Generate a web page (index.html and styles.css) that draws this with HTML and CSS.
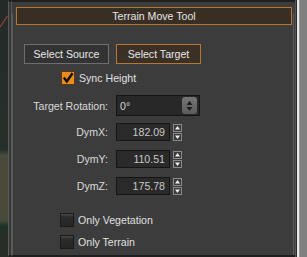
FILE: index.html
```html
<!DOCTYPE html>
<html>
<head>
<meta charset="utf-8">
<link rel="stylesheet" href="styles.css">
</head>
<body>
<div class="win">
  <div class="backdrop">
    <svg class="scratch" width="8" height="40" viewBox="0 0 8 40"><line x1="7.5" y1="16" x2="0" y2="27" stroke="#a0403a" stroke-width="1.2"/></svg>
  </div>
  <div class="edge-left"></div>
  <div class="panel">
    <div class="group">
      <div class="title">Terrain Move Tool</div>
      <div class="btn-row">
        <div class="btn">Select Source</div>
        <div class="btn active">Select Target</div>
      </div>
      <div class="check-row sync">
        <span class="box checked">
          <svg width="12" height="12" viewBox="0 0 12 12"><path d="M1.8 5.5 L4.8 9.5 L10.5 1.2" fill="none" stroke="#140e06" stroke-width="2.4"/></svg>
        </span>
        <span class="check-label">Sync Height</span>
      </div>
      <div class="form-row combo-row">
        <span class="lbl">Target Rotation:</span>
        <div class="combo">
          <span class="combo-text">0°</span>
          <span class="combo-btn">
            <svg width="7" height="12" viewBox="0 0 7 12"><path d="M3.5 1 L6.5 5 L0.5 5 Z M0.5 7 L6.5 7 L3.5 11 Z" fill="#1c1c1c"/></svg>
          </span>
        </div>
      </div>
      <div class="form-row num-row">
        <span class="lbl">DymX:</span>
        <div class="num">182.09</div>
        <div class="spin">
          <span class="sbtn"><svg width="7" height="6" viewBox="0 0 7 6"><path d="M3.5 1 L6 4.5 L1 4.5 Z" fill="#f0f0f0"/></svg></span>
          <span class="sbtn"><svg width="7" height="6" viewBox="0 0 7 6"><path d="M1 1.5 L6 1.5 L3.5 5 Z" fill="#f0f0f0"/></svg></span>
        </div>
      </div>
      <div class="form-row num-row">
        <span class="lbl">DymY:</span>
        <div class="num">110.51</div>
        <div class="spin">
          <span class="sbtn"><svg width="7" height="6" viewBox="0 0 7 6"><path d="M3.5 1 L6 4.5 L1 4.5 Z" fill="#f0f0f0"/></svg></span>
          <span class="sbtn"><svg width="7" height="6" viewBox="0 0 7 6"><path d="M1 1.5 L6 1.5 L3.5 5 Z" fill="#f0f0f0"/></svg></span>
        </div>
      </div>
      <div class="form-row num-row">
        <span class="lbl">DymZ:</span>
        <div class="num">175.78</div>
        <div class="spin">
          <span class="sbtn"><svg width="7" height="6" viewBox="0 0 7 6"><path d="M3.5 1 L6 4.5 L1 4.5 Z" fill="#f0f0f0"/></svg></span>
          <span class="sbtn"><svg width="7" height="6" viewBox="0 0 7 6"><path d="M1 1.5 L6 1.5 L3.5 5 Z" fill="#f0f0f0"/></svg></span>
        </div>
      </div>
      <div class="check-row veg">
        <span class="box"></span>
        <span class="check-label">Only Vegetation</span>
      </div>
      <div class="check-row ter">
        <span class="box"></span>
        <span class="check-label">Only Terrain</span>
      </div>
    </div>
  </div>
  <div class="edge-right"></div>
</div>
</body>
</html>
```

FILE: styles.css
```css
html, body {
  margin: 0;
  padding: 0;
}
body {
  width: 307px;
  height: 257px;
  overflow: hidden;
  background: #3c3c3c;
  font-family: "Liberation Sans", Arial, sans-serif;
  font-size: 10.6px;
  color: #dedede;
}
.win {
  display: flex;
  width: 307px;
  height: 257px;
}
.backdrop {
  width: 8px;
  flex: none;
  background: linear-gradient(to bottom, #232a27 0px, #26302b 150px, #4a4a3a 155px, #4a4a3a 220px, #1d3226 226px, #2a2c28 240px, #2a2c28 257px);
}
.scratch {
  display: block;
}
.edge-left {
  width: 2px;
  flex: none;
  background: #383838;
  border-left: 1px solid #5c5c5c;
  border-right: 1px solid #585858;
  border-top: 2px solid #1f1f1f;
  border-bottom: 2px solid #1f1f1f;
}
.panel {
  width: 283px;
  flex: none;
  background: #3c3c3c;
  border-top: 2px solid #1f1f1f;
  border-bottom: 2px solid #1f1f1f;
  box-sizing: border-box;
  padding-top: 12px;
  display: flex;
}
.group {
  width: 282px;
  flex: none;
  border-left: 1px solid #5b5b5b;
  border-right: 1px solid #5b5b5b;
  box-sizing: border-box;
}
.title {
  margin: -7px 0 0 3px;
  width: 276px;
  height: 18px;
  box-sizing: border-box;
  border: 1px solid #b07637;
  background: #382e24;
  color: #e6e6e6;
  text-align: center;
  line-height: 16px;
}
.btn-row {
  display: flex;
  gap: 7px;
  margin-top: 19px;
  padding-left: 11px;
}
.btn {
  width: 85px;
  height: 20px;
  box-sizing: border-box;
  border: 1px solid #6e6e6e;
  background: #333333;
  color: #e8e8e8;
  text-align: center;
  line-height: 18px;
}
.btn.active {
  border-color: #b27838;
  background: #3a3026;
}
.check-row {
  display: flex;
  align-items: center;
  gap: 4px;
}
.sync {
  margin-top: 7px;
  padding-left: 48px;
}
.veg {
  margin-top: 18px;
  padding-left: 47px;
}
.ter {
  margin-top: 8px;
  padding-left: 47px;
}
.box {
  width: 14px;
  height: 14px;
  box-sizing: border-box;
  border: 1px solid #1a1a1a;
  background: linear-gradient(to bottom, #4a4a4a 0px, #2c2c2c 3px, #262626 100%);
  display: flex;
  align-items: center;
  justify-content: center;
}
.box.checked {
  background: #e88c1e;
  border-color: #5a360e;
}
.check-label {
  color: #e0e0e0;
}
.form-row {
  display: flex;
  align-items: center;
}
.lbl {
  width: 95px;
  margin-right: 8px;
  text-align: right;
  color: #dadada;
}
.combo-row {
  margin-top: 10px;
}
.combo {
  width: 84px;
  height: 21px;
  box-sizing: border-box;
  border: 1px solid #141414;
  background: #282828;
  display: flex;
  align-items: center;
  justify-content: space-between;
  padding: 1px 2px 1px 3px;
}
.combo-text {
  color: #d4d4d4;
}
.combo-btn {
  width: 15px;
  height: 17px;
  border-radius: 3px;
  background: linear-gradient(to bottom, #767676, #5c5c5c);
  display: flex;
  align-items: center;
  justify-content: center;
}
.num-row {
  margin-top: 8px;
}
.num-row + .num-row {
  margin-top: 9px;
}
.combo-row + .num-row {
  margin-top: 7px;
}
.num {
  width: 54px;
  height: 18px;
  box-sizing: border-box;
  border: 1px solid #151515;
  background: #2a2a2a;
  color: #c8c8c8;
  text-align: right;
  line-height: 16px;
  padding-right: 4px;
}
.spin {
  margin-left: 3px;
  display: flex;
  flex-direction: column;
  gap: 1px;
}
.sbtn {
  width: 9px;
  height: 8px;
  box-sizing: border-box;
  border: 1px solid #8a8a8a;
  background: #3a3a3a;
  display: flex;
  align-items: center;
  justify-content: center;
}
.edge-right {
  flex: 1;
  background: linear-gradient(to right, #555555 0px, #555555 1px, #2a2a2a 1px, #2a2a2a 2px, #e8e8e8 2px, #e8e8e8 4px, #9a9a9a 4px, #9a9a9a 5px, #808080 5px);
}
```
